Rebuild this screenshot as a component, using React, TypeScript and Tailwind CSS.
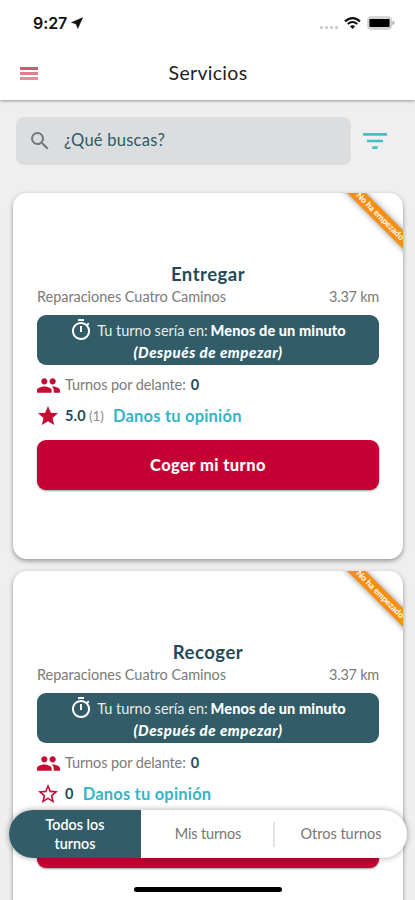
import {
  MdFilterList,
  MdOutlineTimer,
  MdPeople,
  MdSearch,
  MdStar,
  MdStarBorder,
} from "react-icons/md";

interface Service {
  name: string;
  place: string;
  distance: string;
  ahead: number;
  rating: string;
  reviews?: number;
}

const SERVICES: Service[] = [
  {
    name: "Entregar",
    place: "Reparaciones Cuatro Caminos",
    distance: "3.37 km",
    ahead: 0,
    rating: "5.0",
    reviews: 1,
  },
  {
    name: "Recoger",
    place: "Reparaciones Cuatro Caminos",
    distance: "3.37 km",
    ahead: 0,
    rating: "0",
  },
];

function StatusBar() {
  return (
    <div className="flex h-[46px] items-center justify-between pr-[20px] pl-[33px]">
      <div className="flex items-center gap-[4px]">
        <span className="font-['Inter'] text-[16px] leading-none font-semibold tracking-[-0.1px] text-[#111]">
          9:27
        </span>
        <svg viewBox="0 0 12 12" className="h-[12px] w-[12px]" fill="#111">
          <path d="M11.8 0.6 L0.4 5.4 L5 6.9 L6.8 11.6 Z" stroke="#111" strokeWidth="0.4" />
        </svg>
      </div>
      <div className="flex items-center">
        <div className="mt-[8px] flex gap-[2px]">
          <span className="h-[3px] w-[3px] rounded-full bg-[#c4c4c4]" />
          <span className="h-[3px] w-[3px] rounded-full bg-[#c4c4c4]" />
          <span className="h-[3px] w-[3px] rounded-full bg-[#c4c4c4]" />
          <span className="h-[3px] w-[3px] rounded-full bg-[#c4c4c4]" />
        </div>
        <svg viewBox="0 0 17 12" className="ml-[6px] h-[12px] w-[17px]" fill="none" stroke="#111">
          <path d="M1 4.4 Q8.5 -2.2 16 4.4" strokeWidth="2.2" />
          <path d="M3.7 7.1 Q8.5 2.9 13.3 7.1" strokeWidth="2" />
          <path d="M8.5 12 L5.9 9.3 Q8.5 7 11.1 9.3 Z" fill="#111" stroke="none" />
        </svg>
        <svg viewBox="0 0 28 14" className="ml-[6px] h-[14px] w-[28px]">
          <rect x="0.8" y="0.8" width="23.6" height="12.4" rx="3.4" fill="#d6d6d6" stroke="#cfcfcf" strokeWidth="1.2" />
          <rect x="2.4" y="3" width="20.2" height="8" rx="0.8" fill="#000" />
          <path d="M25.4 4.8 Q27.6 5.6 27.6 7 Q27.6 8.4 25.4 9.2 Z" fill="#aaa" />
        </svg>
      </div>
    </div>
  );
}

function Header() {
  return (
    <header className="relative z-10 h-[100px] shrink-0 bg-white shadow-[0_1px_3px_rgba(0,0,0,0.38)]">
      <StatusBar />
      <div className="flex h-[54px] items-center px-5">
        <div className="flex w-[18px] flex-col gap-[2px]">
          <span className="h-[3px] bg-[#cf5a70]" />
          <span className="h-[3px] bg-[#dc7d8e]" />
          <span className="h-[3px] bg-[#e28d9b]" />
        </div>
        <h1 className="flex-1 pr-[17px] pb-px text-center text-[19.5px] leading-none tracking-[0.3px] text-[#222]">
          Servicios
        </h1>
      </div>
    </header>
  );
}

function SearchRow() {
  return (
    <div className="flex items-center pl-4">
      <div className="flex h-[48px] w-[335px] items-center rounded-lg bg-[#dbdddf] pl-[12px]">
        <MdSearch className="h-6 w-6 text-[#737678]" />
        <span className="ml-[12px] pb-px text-[16.5px] leading-none tracking-[0.25px] text-[#2e5a66]">
          ¿Qué buscas?
        </span>
      </div>
      <MdFilterList className="ml-[8px] h-8 w-8 text-[#48bdca]" />
    </div>
  );
}

function ServiceCard({ service }: { service: Service }) {
  const StarIcon = service.reviews ? MdStar : MdStarBorder;

  return (
    <article className="relative h-[366px] shrink-0 rounded-[14px] bg-white px-6 pt-[69px] shadow-[0_2px_5px_rgba(0,0,0,0.38)]">
      {/* Corner ribbon */}
      <div className="absolute inset-0 overflow-hidden rounded-[14px]">
        <div className="absolute top-[17px] left-[322px] flex h-[13px] w-[90px] rotate-45 items-center justify-center bg-[#f88f12] shadow-[0_0_6px_rgba(0,0,0,0.45)]">
          <span className="text-[8.5px] leading-none font-bold whitespace-nowrap text-white">
            No ha empezado
          </span>
        </div>
      </div>

      <h2 className="text-center text-[18.5px] leading-[24px] font-bold tracking-[0.5px] text-[#1f4b59]">
        {service.name}
      </h2>
      <div className="flex justify-between text-[14.5px] leading-[21px] text-[#7a7a7a]">
        <span className="tracking-[-0.04px]">{service.place}</span>
        <span className="tracking-[-0.25px]">{service.distance}</span>
      </div>

      <div className="mt-[8px] flex h-[50px] flex-col items-center rounded-[9px] bg-[#315c68] pt-[4px] text-[14.5px] text-white">
        <div className="flex h-[23px] items-center">
          <MdOutlineTimer className="-mt-px -ml-px h-6 w-6" />
          <span className="ml-[4px] text-[#e8eef0]">Tu turno sería en:</span>
          <span className="ml-[3px] font-black tracking-[0.1px]">Menos de un minuto</span>
        </div>
        <span className="text-[15px] leading-[20px] font-black tracking-[0.55px] italic">(Después de empezar)</span>
      </div>

      <div className="mt-[8px] flex h-[24px] items-center text-[14.5px]">
        <MdPeople className="mt-px -ml-px h-[25px] w-[25px] text-[#c60c35]" />
        <span className="ml-[4px] tracking-[-0.1px] text-[#7a7a7a]">Turnos por delante:</span>
        <span className="ml-[5px] font-bold text-[#1f4b59]">{service.ahead}</span>
      </div>
      <div className="mt-[7px] flex h-[24px] items-center text-[14.5px]">
        <StarIcon className="-ml-px h-[24px] w-[24px] text-[#c60c35]" />
        <span className="ml-[5px] font-bold tracking-[0.2px] text-[#1f4b59]">{service.rating}</span>
        {service.reviews && <span className="ml-[3px] text-[13.5px] text-[#8d8d8d]">({service.reviews})</span>}
        <span className="ml-[9px] text-[16.5px] font-bold tracking-[0.2px] text-[#35b5c6]">Danos tu opinión</span>
      </div>

      <button className="mt-[12px] flex h-[50px] w-full items-center justify-center rounded-[9px] bg-[#c50034] text-[16.5px] font-black tracking-[0.4px] text-white shadow-[0_1px_2px_rgba(0,0,0,0.4)]">
        Coger mi turno
      </button>
    </article>
  );
}

function BottomTabs() {
  return (
    <nav className="absolute top-[810px] left-[9px] z-20 flex h-[48px] w-[398px] items-center overflow-hidden rounded-full bg-white text-[14.5px] text-[#757575] shadow-[0_0_6px_rgba(0,0,0,0.35)]">
      <div className="flex h-full w-[132px] items-center justify-center bg-[#315c68] text-center text-[14.3px] leading-[19px] font-semibold text-white">
        Todos los
        <br />
        turnos
      </div>
      <div className="flex-1 pl-[2px] text-center tracking-[-0.15px]">Mis turnos</div>
      <span className="h-[25px] w-[2px] bg-[#e2e2e2]" />
      <div className="w-[132px] text-center">Otros turnos</div>
    </nav>
  );
}

export default function App() {
  return (
    <div className="relative flex h-[900px] w-[415px] flex-col overflow-hidden bg-[#efefef] font-['Lato',sans-serif]">
      <Header />
      <main className="flex flex-col pt-[17px]">
        <SearchRow />
        <div className="mt-[28px] mr-[12px] ml-[13px] flex flex-col gap-3">
          {SERVICES.map((service) => (
            <ServiceCard key={service.name} service={service} />
          ))}
        </div>
      </main>
      <BottomTabs />
      {/* Home indicator */}
      <div className="absolute top-[887px] left-[134px] z-20 h-[5px] w-[148px] rounded-full bg-black" />
    </div>
  );
}
